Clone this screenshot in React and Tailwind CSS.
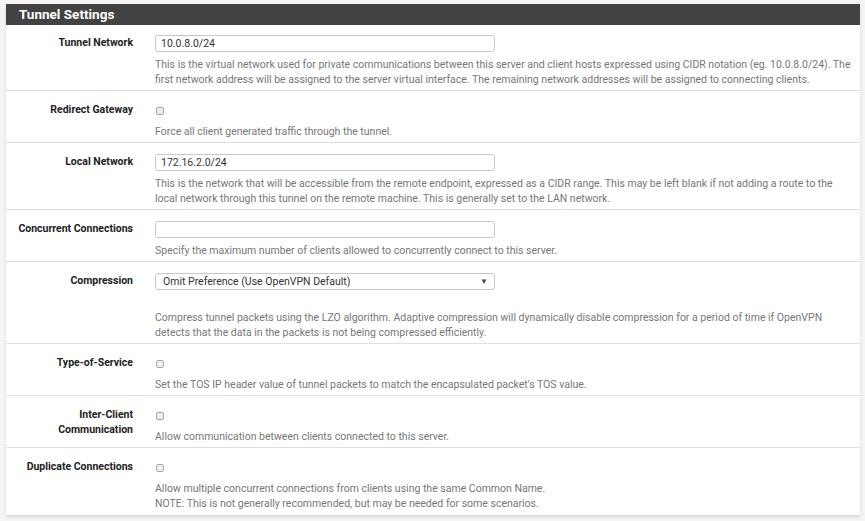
const rows = [
  {
    label: "Tunnel Network",
    type: "input",
    value: "10.0.8.0/24",
    help: [
      "This is the virtual network used for private communications between this server and client hosts expressed using CIDR notation (eg. 10.0.8.0/24). The",
      "first network address will be assigned to the server virtual interface. The remaining network addresses will be assigned to connecting clients.",
    ],
  },
  {
    label: "Redirect Gateway",
    type: "checkbox",
    help: ["Force all client generated traffic through the tunnel."],
  },
  {
    label: "Local Network",
    type: "input",
    value: "172.16.2.0/24",
    help: [
      "This is the network that will be accessible from the remote endpoint, expressed as a CIDR range. This may be left blank if not adding a route to the",
      "local network through this tunnel on the remote machine. This is generally set to the LAN network.",
    ],
  },
  {
    label: "Concurrent Connections",
    type: "input",
    value: "",
    help: [
      "Specify the maximum number of clients allowed to concurrently connect to this server.",
    ],
  },
  {
    label: "Compression",
    type: "select",
    value: "Omit Preference (Use OpenVPN Default)",
    help: [
      "Compress tunnel packets using the LZO algorithm. Adaptive compression will dynamically disable compression for a period of time if OpenVPN",
      "detects that the data in the packets is not being compressed efficiently.",
    ],
  },
  {
    label: "Type-of-Service",
    type: "checkbox",
    help: [
      "Set the TOS IP header value of tunnel packets to match the encapsulated packet's TOS value.",
    ],
  },
  {
    label: ["Inter-Client", "Communication"],
    type: "checkbox",
    help: ["Allow communication between clients connected to this server."],
  },
  {
    label: "Duplicate Connections",
    type: "checkbox",
    help: [
      "Allow multiple concurrent connections from clients using the same Common Name.",
      "NOTE: This is not generally recommended, but may be needed for some scenarios.",
    ],
  },
];

function Control({ row }) {
  if (row.type === "checkbox") {
    return (
      <div className="h-[17px] flex items-center">
        <span className="ml-[1px] w-[8px] h-[8px] rounded-[2px] border border-[#a9a9a9] bg-[#ededed]" />
      </div>
    );
  }
  if (row.type === "select") {
    return (
      <>
        <div className="w-[340px] h-[17px] border border-[#c8c8c8] rounded-[3px] bg-white flex items-center justify-between pl-[7px] pr-[6px] text-[#333]">
          <span>{row.value}</span>
          <span className="text-[8px] text-[#444]">▼</span>
        </div>
        <div className="h-[15px]" />
      </>
    );
  }
  return (
    <div className="w-[340px] h-[17px] border border-[#c8c8c8] rounded-[3px] bg-white flex items-center pl-[5px] text-[#333]">
      {row.value}
    </div>
  );
}

export default function App() {
  return (
    <div
      className="min-h-[521px] bg-[#f4f4f4] pt-[4px] pl-[6px]"
      style={{ fontFamily: "Roboto, 'Liberation Sans', sans-serif" }}
    >
      <div className="w-[854px] bg-white shadow-[0_2px_3px_rgba(0,0,0,0.12)]">
        {/* Header */}
        <div className="h-[21px] bg-[#424242] flex items-center pl-[13px]">
          <span className="text-white font-bold text-[13.5px]">Tunnel Settings</span>
        </div>

        {rows.map((row, i) => (
          <div
            key={i}
            className={`flex ${i === 0 ? "pt-[10px]" : "pt-[11px]"} ${i === rows.length - 1 ? "pb-[4px]" : "pb-[3px] border-b border-[#e0e0e0]"} text-[10.5px] leading-[15px]`}
          >
            <div className="w-[127px] shrink-0 text-right font-bold text-[#222]">
              {Array.isArray(row.label)
                ? row.label.map((l) => <div key={l}>{l}</div>)
                : row.label}
            </div>
            <div className="ml-[22px] flex-1 min-w-0 pr-[6px]">
              <Control row={row} />
              <div className="mt-[5px] text-[#777]">
                {row.help.map((h) => (
                  <div key={h} className="whitespace-nowrap">{h}</div>
                ))}
              </div>
            </div>
          </div>
        ))}
      </div>
    </div>
  );
}
